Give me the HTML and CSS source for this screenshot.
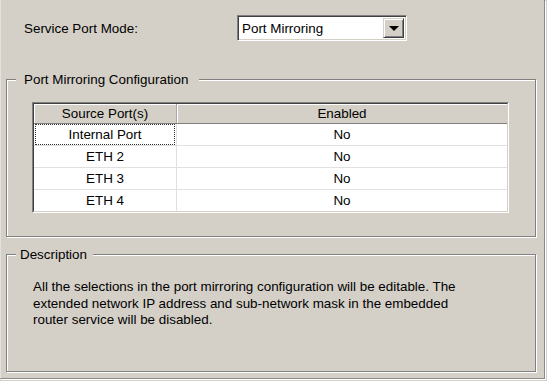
FILE: index.html
```html
<!DOCTYPE html>
<html>
<head>
<meta charset="utf-8">
<link rel="stylesheet" href="styles.css">
</head>
<body>
<div class="window">
  <div class="mode-row">
    <span class="mode-label">Service Port Mode:</span>
    <div class="select">
      <span class="select-value">Port Mirroring</span>
      <span class="select-btn"><span class="arrow"></span></span>
    </div>
  </div>

  <fieldset class="group config">
    <legend class="legend legend-config">Port Mirroring Configuration</legend>
    <div class="config-body">
      <div class="grid-outer">
        <div class="grid-inner">
          <table class="grid">
            <thead>
              <tr><th class="col-src">Source Port(s)</th><th class="col-en">Enabled</th></tr>
            </thead>
            <tbody>
              <tr><td class="col-src"><span class="focus">Internal Port</span></td><td>No</td></tr>
              <tr><td class="col-src">ETH 2</td><td>No</td></tr>
              <tr><td class="col-src">ETH 3</td><td>No</td></tr>
              <tr class="last"><td class="col-src">ETH 4</td><td>No</td></tr>
            </tbody>
          </table>
        </div>
      </div>
    </div>
  </fieldset>

  <fieldset class="group desc">
    <legend class="legend legend-desc">Description</legend>
    <p class="desc-text">All the selections in the port mirroring configuration will be editable. The<br>extended network IP address and sub-network mask in the embedded<br>router service will be disabled.</p>
  </fieldset>
</div>
</body>
</html>
```

FILE: styles.css
```css
html, body {
  margin: 0;
  padding: 0;
  background: #d4d0c8;
}
body {
  width: 547px;
  height: 381px;
  overflow: hidden;
  font-family: "Liberation Sans", Arial, sans-serif;
  font-size: 13.4px;
  color: #000;
}
.window {
  box-sizing: border-box;
  width: 545px;
  height: 379px;
  border-right: 1px solid #8a8a8a;
  border-bottom: 1px solid #8a8a8a;
  border-left: 1px solid #e4e1dc;
  box-shadow: 1px 1px 0 #ffffff;
  padding-top: 15px;
}
.mode-row {
  display: flex;
  align-items: center;
  height: 26px;
  padding-left: 23px;
}
.mode-label {
  width: 213px;
  line-height: 15px;
}
.select {
  box-sizing: border-box;
  width: 170px;
  height: 26px;
  display: flex;
  align-items: stretch;
  background: #fff;
  border: 1px solid;
  border-color: #808080 #ffffff #ffffff #808080;
  box-shadow: inset 1px 1px 0 #404040, inset -1px -1px 0 #d4d0c8;
  padding: 2px;
}
.select-value {
  flex: 1;
  display: flex;
  align-items: center;
  padding-left: 2px;
  line-height: 15px;
}
.select-btn {
  box-sizing: border-box;
  width: 21px;
  display: flex;
  align-items: center;
  justify-content: center;
  background: #d4d0c8;
  border: 1px solid;
  border-color: #d4d0c8 #404040 #404040 #d4d0c8;
  box-shadow: inset 1px 1px 0 #ffffff, inset -1px -1px 0 #808080;
}
.arrow {
  width: 0;
  height: 0;
  border-left: 5px solid transparent;
  border-right: 5px solid transparent;
  border-top: 5px solid #000;
  margin-top: 1px;
}

.group {
  box-sizing: border-box;
  width: 530px;
  margin: 0 0 0 5px;
  padding: 0;
  min-width: 0;
  border: 1px solid #808080;
  box-shadow: inset 1px 1px 0 #ffffff, 1px 1px 0 #ffffff;
}
.legend {
  background: #d4d0c8;
  line-height: 15px;
  font-size: 13.4px;
}
.config {
  margin-top: 31px;
}
.legend-config {
  margin-left: 9px;
  padding: 0 11px 0 8px;
}
.config-body {
  padding: 15px 26px 23px 25px;
}
.grid-outer {
  border: 1px solid;
  border-color: #808080 #ffffff #ffffff #808080;
}
.grid-inner {
  border: 1px solid;
  border-color: #404040 #d4d0c8 #d4d0c8 #404040;
  background: #fff;
}
.grid {
  width: 100%;
  border-collapse: collapse;
  table-layout: fixed;
}
.grid th, .grid td {
  padding: 0;
  text-align: center;
  font-weight: normal;
  line-height: 15px;
}
.grid th {
  height: 19px;
  background: #d4d0c8;
  border-bottom: 1px solid #808080;
  border-right: 1px solid #a8a8a8;
  box-shadow: inset 1px 1px 0 #ffffff;
}
.grid th.col-en {
  border-right: 0;
}
.grid .col-src {
  width: 142px;
}
.grid td {
  height: 21px;
  border-bottom: 1px solid #e2e0dc;
  border-right: 1px solid #e2e0dc;
}
.grid td:last-child {
  border-right: 0;
}
.grid tr.last td {
  border-bottom: 0;
}
.grid td .focus {
  display: block;
  box-sizing: border-box;
  height: 21px;
  line-height: 19px;
  border: 1px dotted #333;
  margin: 0 1px;
}

.desc {
  margin-top: 10px;
}
.legend-desc {
  margin-left: 9px;
  padding: 0 6px 0 4px;
}
.desc-text {
  margin: 0;
  padding: 17px 0 42px 26px;
  line-height: 16.5px;
}
```
